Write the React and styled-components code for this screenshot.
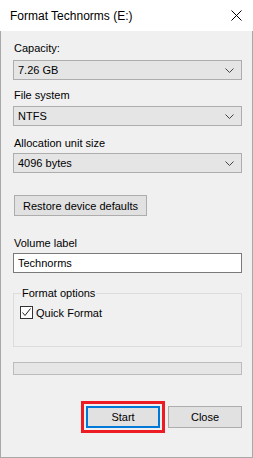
import React from "react";
import styled, { createGlobalStyle } from "styled-components";

const GlobalStyle = createGlobalStyle`
  html, body {
    margin: 0;
    padding: 0;
    background: #f0f0f0;
  }
  * {
    box-sizing: border-box;
  }
`;

const Window = styled.div`
  width: 253px;
  height: 458px;
  display: flex;
  flex-direction: column;
  background: #f0f0f0;
  font-family: "Liberation Sans", Arial, sans-serif;
  font-size: 11px;
  color: #000;
`;

const TitleBar = styled.div`
  height: 31px;
  flex-shrink: 0;
  background: #fff;
  display: flex;
  align-items: center;
  justify-content: space-between;
  padding: 0 11px 0 10px;
`;

const Title = styled.span`
  font-family: "Liberation Sans", Arial, sans-serif;
  font-size: 12px;
  color: #000;
`;

const Body = styled.div`
  flex: 1;
  display: flex;
  flex-direction: column;
  padding: 0 10px 0 12px;
  border-left: 1px solid #a8a8a8;
  border-right: 1px solid #a8a8a8;
  border-bottom: 1px solid #a8a8a8;
`;

const Label = styled.div`
  height: 14px;
  line-height: 14px;
  margin-top: ${(p) => p.top}px;
  padding-left: 1px;
`;

const Select = styled.div`
  height: 20px;
  margin-top: ${(p) => p.top}px;
  background: #e5e5e5;
  border: 1px solid #adadad;
  display: flex;
  align-items: center;
  justify-content: space-between;
  padding: 0 7px 0 4px;
`;

const TextInput = styled.div`
  height: 20px;
  margin-top: ${(p) => p.top}px;
  background: #fff;
  border: 1px solid #7a7a7a;
  display: flex;
  align-items: center;
  padding: 0 4px;
`;

const PushButton = styled.div`
  width: ${(p) => p.w}px;
  height: ${(p) => p.h || 21}px;
  background: #e1e1e1;
  border: ${(p) => (p.focused ? "2px solid #0078d7" : "1px solid #adadad")};
  display: flex;
  align-items: center;
  justify-content: center;
  flex-shrink: 0;
`;

const RestoreRow = styled.div`
  margin-top: 22px;
  padding-left: 1px;
  display: flex;
`;

const GroupBox = styled.fieldset`
  margin: 13px 0 0;
  height: 61px;
  border: 1px solid #dcdcdc;
  padding: 0 6px;
  min-width: 0;
`;

const Legend = styled.legend`
  padding: 0 1px;
  margin-left: 1px;
  line-height: 14px;
`;

const CheckRow = styled.div`
  display: flex;
  align-items: center;
  gap: 3px;
  margin-top: 6px;
`;

const CheckBox = styled.div`
  width: 13px;
  height: 13px;
  background: #fff;
  border: 1px solid #333;
  display: flex;
  align-items: center;
  justify-content: center;
`;

const Progress = styled.div`
  height: 13px;
  margin-top: 15px;
  background: #e6e6e6;
  border: 1px solid #bcbcbc;
`;

const ButtonRow = styled.div`
  margin-top: 26px;
  display: flex;
  justify-content: flex-end;
  align-items: center;
  gap: 3px;
`;

const Highlight = styled.div`
  border: 3px solid #ed1c24;
  padding: 2px;
  background: #f0f0f0;
`;

const Chevron = () => (
  <svg width="9" height="5" viewBox="0 0 9 5">
    <path d="M0.5 0.5 L4.5 4.5 L8.5 0.5" fill="none" stroke="#444" strokeWidth="1" />
  </svg>
);

const Dropdown = ({ top, children }) => (
  <Select top={top}>
    <span>{children}</span>
    <Chevron />
  </Select>
);

export default function App() {
  return (
    <>
      <GlobalStyle />
      <Window>
        <TitleBar>
          <Title>Format Technorms (E:)</Title>
          <svg width="11" height="11" viewBox="0 0 11 11">
            <path d="M0.5 0.5 L10.5 10.5 M10.5 0.5 L0.5 10.5" stroke="#000" strokeWidth="1" />
          </svg>
        </TitleBar>
        <Body>
          <Label top={10}>Capacity:</Label>
          <Dropdown top={5}>7.26 GB</Dropdown>
          <Label top={8}>File system</Label>
          <Dropdown top={4}>NTFS</Dropdown>
          <Label top={10}>Allocation unit size</Label>
          <Dropdown top={3}>4096 bytes</Dropdown>
          <RestoreRow>
            <PushButton w={133}>Restore device defaults</PushButton>
          </RestoreRow>
          <Label top={20}>Volume label</Label>
          <TextInput top={3}>Technorms</TextInput>
          <GroupBox>
            <Legend>Format options</Legend>
            <CheckRow>
              <CheckBox>
                <svg width="11" height="11" viewBox="0 0 11 11">
                  <path d="M1.5 5.5 L4 8.5 L9.5 1.5" fill="none" stroke="#222" strokeWidth="1" />
                </svg>
              </CheckBox>
              <span>Quick Format</span>
            </CheckRow>
          </GroupBox>
          <Progress />
          <ButtonRow>
            <Highlight>
              <PushButton w={74} h={22} focused>
                Start
              </PushButton>
            </Highlight>
            <PushButton w={74} h={22}>
              Close
            </PushButton>
          </ButtonRow>
        </Body>
      </Window>
    </>
  );
}
